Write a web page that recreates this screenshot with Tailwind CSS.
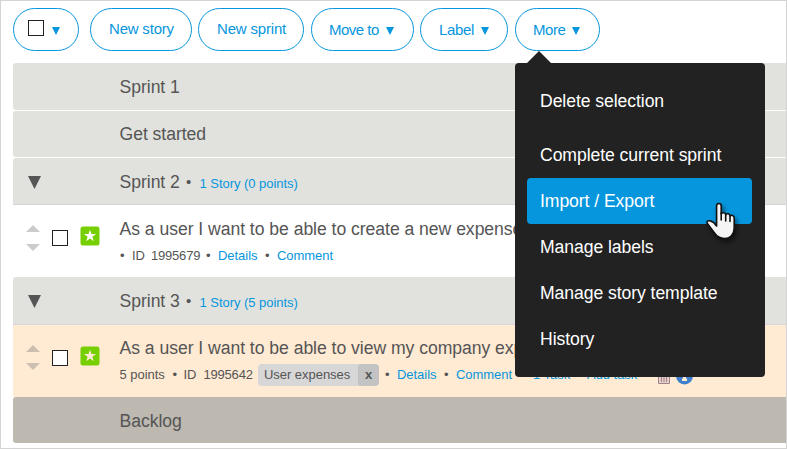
<!DOCTYPE html>
<html lang="en">
<head>
<meta charset="utf-8">
<title>Backlog</title>
<script src="https://cdn.jsdelivr.net/npm/@tailwindcss/browser@4"></script>
</head>
<body class="bg-white">
<svg class="hidden">
  <symbol id="tri" viewBox="0 0 10 10" preserveAspectRatio="none"><path d="M0 0H10L5 10Z" fill="currentColor"/></symbol>
  <symbol id="up" viewBox="0 0 10 10" preserveAspectRatio="none"><path d="M0 10H10L5 0Z" fill="currentColor"/></symbol>
</svg>
<div class="relative flex h-[449px] w-[787px] flex-col overflow-hidden border border-[#d4d4d4] pl-3 font-['Liberation_Sans',Arial,sans-serif] text-[#555]">
  <!-- toolbar -->
  <div class="flex h-[43px] shrink-0 mt-[7px] text-[15px] leading-[17px] text-[#0696dd]">
    <button class="flex w-[66px] items-start rounded-full border border-[#0696dd] pl-[14px] pt-[11px]"><span class="size-4 border border-[#222]"></span><svg class="ml-[8px] mt-[7px] h-[8px] w-[8px]"><use href="#tri"/></svg></button>
    <button class="ml-[11px] flex w-[102px] items-start whitespace-nowrap rounded-full border border-[#0696dd] pl-[18px] pt-[11px] tracking-[-0.2px]">New story</button>
    <button class="ml-[6px] flex w-[106px] items-start whitespace-nowrap rounded-full border border-[#0696dd] pl-[18px] pt-[11px] tracking-[-0.18px]">New sprint</button>
    <button class="ml-[7px] flex w-[103px] items-start whitespace-nowrap rounded-full border border-[#0696dd] pl-[17px] pt-[12px] tracking-[-0.5px]"><span class="w-[57px] text-left">Move to</span><svg class="mt-[6px] h-[8px] w-[8px]"><use href="#tri"/></svg></button>
    <button class="ml-[6px] flex w-[88px] items-start whitespace-nowrap rounded-full border border-[#0696dd] pl-[18px] pt-[12px] tracking-[-0.35px]"><span class="w-[42px] text-left">Label</span><svg class="mt-[6px] h-[8px] w-[8px]"><use href="#tri"/></svg></button>
    <button class="ml-[7px] flex w-[85px] items-start whitespace-nowrap rounded-full border border-[#0696dd] pl-[17px] pt-[12px] tracking-[-0.45px]"><span class="w-[39px] text-left">More</span><svg class="mt-[6px] h-[8px] w-[8px]"><use href="#tri"/></svg></button>
  </div>

  <!-- board -->
  <div class="mt-3 flex flex-col whitespace-nowrap text-[17.6px] leading-5 tracking-[-0.04px]">
    <div class="flex h-[47px] items-center rounded-l-[3px] bg-[#e1e2dd] pl-[106.500px]">Sprint 1</div>
    <div class="mt-px flex h-[46px] items-center rounded-l-[3px] bg-[#e1e2dd] pl-[106.500px]">Get started</div>
    <div class="mt-px flex h-[47px] items-center rounded-tl-[3px] border-b border-[#d6d6d6] bg-[#e1e2dd] pl-[15px] pt-[2px]">
      <svg class="h-[13px] w-[13px]"><use href="#tri"/></svg>
      <span class="ml-[78.500px] w-[66.500px]">Sprint 2</span>
      <span class="w-[13.500px] text-[15px]">•</span><span class="mt-[3px] text-[13px] text-[#0696dd]">1 Story (0 points)</span>
    </div>
    <div class="flex h-[72px] bg-white pl-[13px]">
      <div class="flex flex-col gap-[12px] pt-5 text-[#ccc]"><svg class="h-[7px] w-[14px]"><use href="#up"/></svg><svg class="h-[7px] w-[14px]"><use href="#tri"/></svg></div>
      <span class="ml-3 mt-[25px] size-4 border border-[#222] bg-white"></span>
      <svg class="ml-[12px] mt-[21px] size-5" viewBox="0 0 20 20"><rect x=".5" y=".5" width="19" height="19" rx="2.5" fill="#76cf00"/><path d="M10 3.800L11.500 8H16L12.400 10.700L13.700 15.200L10 12.500L6.300 15.200L7.600 10.700L4 8H8.500Z" fill="#fff"/></svg>
      <div class="ml-[19.500px] pt-[14px]">
        <div>As a user I want to be able to create a new expense</div>
        <div class="ml-[.5px] mt-[8px] flex text-[13px] leading-[18px]"><span class="w-3">•</span><span class="w-[19px]">ID</span><span class="w-[55px] tracking-[-0.2px]">1995679</span><span class="w-3">•</span><span class="w-[47px] text-[#0696dd]">Details</span><span class="w-3">•</span><span class="text-[#0696dd]">Comment</span></div>
      </div>
    </div>
    <div class="flex h-[48px] items-center rounded-tl-[3px] border-b border-[#d6d6d6] bg-[#e1e2dd] pl-[15px] pt-[1px]">
      <svg class="h-[13px] w-[13px]"><use href="#tri"/></svg>
      <span class="ml-[78.500px] w-[66.500px]">Sprint 3</span>
      <span class="w-[13.500px] text-[15px]">•</span><span class="mt-[3px] text-[13px] text-[#0696dd]">1 Story (5 points)</span>
    </div>
    <div class="flex h-[72px] bg-[#ffead3] pl-[13px]">
      <div class="flex flex-col gap-[11px] pt-5 text-[#ccbfb0]"><svg class="h-[7px] w-[14px]"><use href="#up"/></svg><svg class="h-[7px] w-[14px]"><use href="#tri"/></svg></div>
      <span class="ml-3 mt-[25px] size-4 border border-[#222] bg-white"></span>
      <svg class="ml-[12px] mt-[21px] size-5" viewBox="0 0 20 20"><rect x=".5" y=".5" width="19" height="19" rx="2.5" fill="#76cf00"/><path d="M10 3.800L11.500 8H16L12.400 10.700L13.700 15.200L10 12.500L6.300 15.200L7.600 10.700L4 8H8.500Z" fill="#ffead3"/></svg>
      <div class="ml-[19.500px] pt-[13px]">
        <div>As a user I want to be able to view my company exp</div>
        <div class="mt-[6px] flex h-[22px] text-[13px] leading-[22px]">
          <span class="w-[53px]">5 points</span><span class="w-[11px]">•</span><span class="w-5">ID</span><span class="w-[54.500px] tracking-[-0.2px]">1995642</span>
          <span class="flex w-[121px] overflow-hidden rounded-[4px] bg-[#d7d7d7]"><span class="w-[100px] pl-[6px]">User expenses</span><span class="w-[21px] rounded-[3px] bg-[#c3c3c3] text-center font-bold">x</span></span>
          <span class="ml-[6px] w-3">•</span><span class="w-[47px] text-[#0696dd]">Details</span><span class="w-3">•</span><span class="w-[66px] text-[#0696dd]">Comment</span><span class="w-[11px]"></span><span class="w-[54px] text-[#0696dd]">1 Task</span><span class="w-[71px] text-[#0696dd]">Add task</span>
          <svg class="h-[21px] w-[12px]" viewBox="0 0 12 21" fill="none" stroke="#9f8790"><path fill="#e8ccc6" d="M.5 6.500H11.500V19.500H.5Z"/><path d="M3.500 8V18M6 8V18M8.500 8V18"/></svg>
          <svg class="ml-[6px] h-[21px] w-[17px]" viewBox="0 0 17 21"><circle cx="8.500" cy="12" r="8.500" fill="#3f80cd"/><path fill="#ffead3" d="M7 10H10V14.500H11V17H6V14.500H7Z"/></svg>
        </div>
      </div>
    </div>
    <div class="flex h-[46px] items-center rounded-l-[3px] bg-[#bdb8b0] pl-[106.500px] pt-[2px]">Backlog</div>
  </div>

  <!-- "More" menu -->
  <div class="absolute left-[514px] top-[62px] flex h-[314px] w-[250px] flex-col rounded-[4px] bg-[#222] px-3 pt-[15px] text-[17.6px] tracking-[-0.07px] text-white">
    <svg class="absolute left-3 top-[-12px] h-3 w-6 text-[#222]"><use href="#up"/></svg>
    <div class="mb-2 flex h-[46px] items-center px-[13px]">Delete selection</div>
    <div class="flex h-[46px] items-center px-[13px]">Complete current sprint</div>
    <div class="flex h-[46px] w-[225px] items-center rounded-[4px] bg-[#0696dd] pl-[13px]">Import / Export</div>
    <div class="flex h-[46px] items-center px-[13px]">Manage labels</div>
    <div class="flex h-[46px] items-center px-[13px]">Manage story template</div>
    <div class="flex h-[46px] items-center px-[13px]">History</div>
    <!-- hand pointer -->
    <svg class="absolute left-[190px] top-[139px] h-[40px] w-[32px] drop-shadow-[2px_3px_2px_rgba(0,0,0,0.5)]" viewBox="0 0 32 40" stroke="#111" stroke-width="1.600" stroke-linejoin="round" stroke-linecap="round">
      <path fill="#f5f5f5" d="M11.600 24V4C11.600 .7 16.200 .7 16.200 4V12C17.200 10.200 20.400 10.400 20.700 12.700C21.800 11 24.800 11.600 25 14C26.300 12.600 29.200 13.200 29.200 16V26C29.200 32.500 25 36.500 19.500 36.500C14.500 36.500 11.500 34 9.500 31L2.200 21.300C1.300 19.300 3 18.400 5 18.800C8 19.600 10 21.500 11.600 24Z"/>
      <path fill="none" d="M16.200 11V18M20.700 12.500V19M25 14V19.500"/>
    </svg>
  </div>
</div>
</body>
</html>
